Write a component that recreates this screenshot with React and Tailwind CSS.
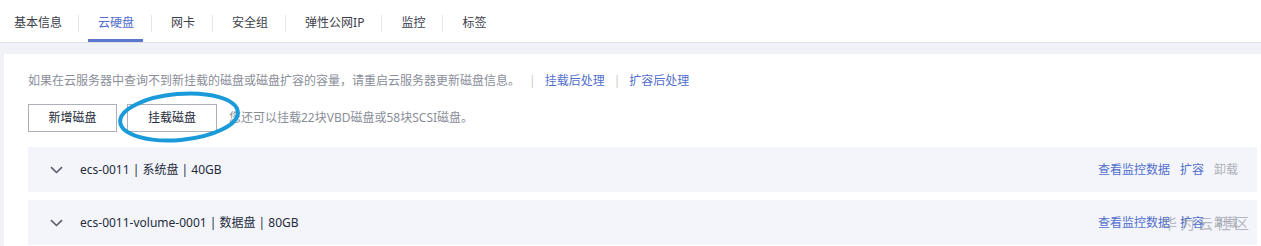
import React from "react";

const font = { fontFamily: '"Noto Sans", "Noto Sans CJK SC", sans-serif' };

const tabs = ["基本信息", "云硬盘", "网卡", "安全组", "弹性公网IP", "监控", "标签"];

function Chevron() {
  return (
    <svg width="13" height="8" viewBox="0 0 13 8" className="shrink-0">
      <path d="M1 1.2 L6.5 6.5 L12 1.2" fill="none" stroke="#575d6c" strokeWidth="1.6" />
    </svg>
  );
}

function DiskRow({ label, watermark }) {
  return (
    <div className="relative flex h-[45px] items-center bg-[#f3f5fb] pl-[22px] pr-[19px]">
      <Chevron />
      <span className="ml-[17px] text-[12px] text-[#252b3a]">{label}</span>
      <div className="ml-auto flex items-center gap-[10px] text-[12px]">
        <span className="text-[#526ecc]">查看监控数据</span>
        <span className="text-[#526ecc]">扩容</span>
        <span className="text-[#adb0b8]">卸载</span>
      </div>
      {watermark && (
        <div className="pointer-events-none absolute left-[1134px] top-[12px] flex items-center text-[15px] tracking-[3px] text-[#8a8e99]/60">
          <span>华为云社区</span>
        </div>
      )}
    </div>
  );
}

export default function App() {
  return (
    <div className="w-[1261px] h-[246px] overflow-hidden bg-[#f0f2f7]" style={font}>
      {/* Tabs */}
      <div className="flex h-[43px] border-b border-[#dcdfe6] bg-white pl-[14px]">
        {tabs.map((t, i) => (
          <React.Fragment key={t}>
            {i > 0 && <div className="mt-[15px] h-[17px] w-px bg-[#e5e6eb]" />}
            <div className={"relative flex pt-[14px] text-[12px] leading-[18px] " + (i === 0 ? "pr-[16px]" : "pl-[19px] pr-[17px]")}>
              <span className={"relative " + (i === 1 ? "text-[#526ecc]" : "text-[#3c404b]")}>
                {t}
                {i === 1 && (
                  <span className="absolute -left-[10px] -right-[9px] top-[25px] h-[3px] bg-[#5b78cf]" />
                )}
              </span>
            </div>
          </React.Fragment>
        ))}
      </div>

      {/* Card */}
      <div className="relative mt-[11px] ml-[4px] bg-white pl-[24px] pr-[4px] pt-[18px] pb-[10px]">
        <div className="flex items-center text-[12px] leading-[18px] text-[#8a8e99]">
          <span>如果在云服务器中查询不到新挂载的磁盘或磁盘扩容的容量，请重启云服务器更新磁盘信息。</span>
          <span className="mx-[9px] text-[#c8cad0]">|</span>
          <span className="text-[#526ecc]">挂载后处理</span>
          <span className="mx-[9px] text-[#c8cad0]">|</span>
          <span className="text-[#526ecc]">扩容后处理</span>
        </div>

        <div className="mt-[14px] flex items-center">
          <button className="h-[28px] w-[89px] border border-[#adb0b8] bg-white text-[12px] text-[#252b3a]">新增磁盘</button>
          <button className="ml-[10px] h-[28px] w-[90px] border border-[#adb0b8] bg-white text-[12px] text-[#252b3a]">挂载磁盘</button>
          <span className="ml-[12px] text-[12px] text-[#8a8e99]">您还可以挂载22块VBD磁盘或58块SCSI磁盘。</span>
        </div>

        {/* hand-drawn annotation ellipse */}
        <svg className="pointer-events-none absolute left-[106px] top-[34px]" width="144" height="60" viewBox="0 0 144 60">
          <ellipse cx="69" cy="29" rx="59" ry="23" fill="none" stroke="#1a9ad9" strokeWidth="4" transform="rotate(-5 69 29)" />
        </svg>

        <div className="mt-[15px] flex flex-col gap-[8px]">
          <DiskRow label="ecs-0011 | 系统盘 | 40GB" />
          <DiskRow label="ecs-0011-volume-0001 | 数据盘 | 80GB" watermark />
        </div>
      </div>
    </div>
  );
}
